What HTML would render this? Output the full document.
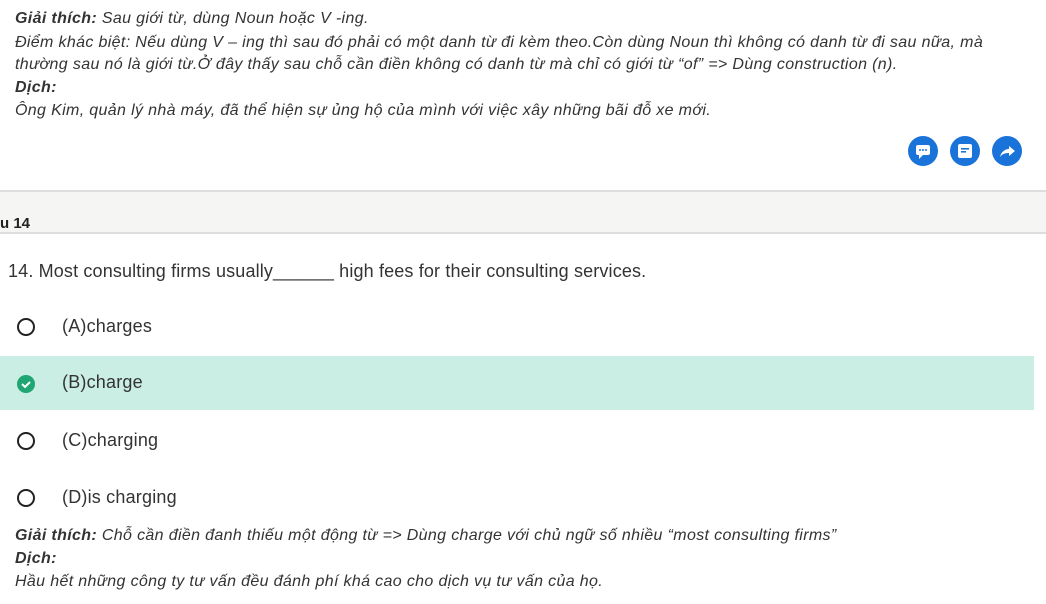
<!DOCTYPE html><html><head><meta charset="utf-8"><style>
body{margin:0;width:1046px;height:604px;overflow:hidden;background:#fff;font-family:"Liberation Sans",Arial,sans-serif;color:#333;position:relative}
.it{position:absolute;left:15px;font-style:italic;font-size:16px;line-height:22px;white-space:nowrap;color:#333;letter-spacing:0.35px}
.it b{font-weight:bold}
.btn{position:absolute;top:136px;width:30px;height:30px;border-radius:50%;background:#1a73d9}
.band{position:absolute;left:0;top:190px;width:1046px;height:44px;background:#f5f5f3;border-top:2px solid #ddd;border-bottom:2px solid #ddd;box-sizing:border-box}
.opt{position:absolute;left:0;width:1034px;height:54px;font-size:18px}
.opt span{position:absolute;left:62px;top:16px;letter-spacing:0.2px}
.rad{position:absolute;left:17px;top:18px;width:14px;height:14px;border:2.5px solid #222;border-radius:50%}
</style></head><body>
<div class="it" style="top:8px"><b>Giải thích:</b> Sau giới từ, dùng Noun hoặc V -ing.</div>
<div class="it" style="top:32px">Điểm khác biệt: Nếu dùng V – ing thì sau đó phải có một danh từ đi kèm theo.Còn dùng Noun thì không có danh từ đi sau nữa, mà</div>
<div class="it" style="top:54px">thường sau nó là giới từ.Ở đây thấy sau chỗ cần điền không có danh từ mà chỉ có giới từ “of” =&gt; Dùng construction (n).</div>
<div class="it" style="top:77px"><b>Dịch:</b></div>
<div class="it" style="top:100px">Ông Kim, quản lý nhà máy, đã thể hiện sự ủng hộ của mình với việc xây những bãi đỗ xe mới.</div>
<div class="btn" style="left:908px"><svg width="30" height="30"><rect x="8" y="9" width="14" height="10" rx="2" fill="#fff"/><path d="M11 19v4l4-4z" fill="#fff"/><circle cx="12" cy="14" r="1" fill="#1a73d9"/><circle cx="15" cy="14" r="1" fill="#1a73d9"/><circle cx="18" cy="14" r="1" fill="#1a73d9"/></svg></div>
<div class="btn" style="left:950px"><svg width="30" height="30"><rect x="8" y="8" width="14" height="14" rx="2" fill="#fff"/><rect x="11" y="12" width="8" height="1.6" fill="#1a73d9"/><rect x="11" y="15" width="5" height="1.6" fill="#1a73d9"/></svg></div>
<div class="btn" style="left:992px"><svg width="30" height="30"><path d="M8 21c1-5 5-8 9-8v-3l6 5-6 5v-3c-4 0-7 1-9 4z" fill="#fff"/></svg></div>
<div class="band"><div style="position:absolute;left:0;top:23px;font-size:15px;font-weight:bold;color:#222">u 14</div></div>
<div style="position:absolute;left:8px;top:261px;font-size:18px;color:#333;letter-spacing:0.15px">14. Most consulting firms usually______ high fees for their consulting services.</div>
<div class="opt" style="top:300px"><div class="rad"></div><span>(A)charges</span></div>
<div class="opt" style="top:356px;background:#cbeee4"><svg style="position:absolute;left:16px;top:18px" width="20" height="20"><circle cx="10" cy="10" r="9" fill="#1fa674"/><path d="M6 10l3 3 5-5" stroke="#fff" stroke-width="2" fill="none"/></svg><span>(B)charge</span></div>
<div class="opt" style="top:414px"><div class="rad"></div><span>(C)charging</span></div>
<div class="opt" style="top:471px"><div class="rad"></div><span>(D)is charging</span></div>
<div class="it" style="top:525px"><b>Giải thích:</b> Chỗ cần điền đanh thiếu một động từ =&gt; Dùng charge với chủ ngữ số nhiều “most consulting firms”</div>
<div class="it" style="top:548px"><b>Dịch:</b></div>
<div class="it" style="top:571px">Hầu hết những công ty tư vấn đều đánh phí khá cao cho dịch vụ tư vấn của họ.</div>
</body></html>
